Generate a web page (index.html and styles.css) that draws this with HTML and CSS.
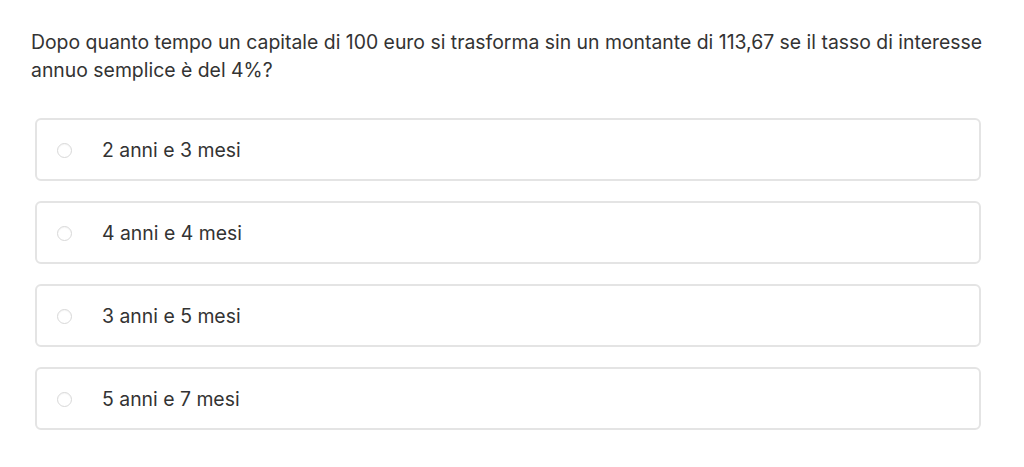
FILE: index.html
```html
<!DOCTYPE html>
<html lang="it">
<head>
<meta charset="utf-8">
<link rel="stylesheet" href="styles.css">
</head>
<body>
<div class="quiz">
  <p class="question">Dopo quanto tempo un capitale di 100 euro si trasforma sin un montante di 113,67 se il tasso di interesse annuo semplice è del 4%?</p>
  <div class="options">
    <label class="option"><span class="radio"></span><span class="label">2 anni e 3 mesi</span></label>
    <label class="option"><span class="radio"></span><span class="label">4 anni e 4 mesi</span></label>
    <label class="option"><span class="radio"></span><span class="label">3 anni e 5 mesi</span></label>
    <label class="option"><span class="radio"></span><span class="label">5 anni e 7 mesi</span></label>
  </div>
</div>
</body>
</html>
```
FILE: styles.css
```css
html, body {
  margin: 0;
  padding: 0;
  background: #ffffff;
}
body {
  font-family: Inter, "Liberation Sans", Arial, sans-serif;
  color: #333333;
}
.quiz {
  padding: 28px 30px 0 31px;
}
.question {
  margin: 0;
  font-size: 19.4px;
  line-height: 28px;
}
.options {
  display: flex;
  flex-direction: column;
  gap: 20px;
  margin: 34px 13px 0 4px;
}
.option {
  display: flex;
  align-items: center;
  height: 63px;
  box-sizing: border-box;
  border: 2px solid #e4e4e4;
  border-radius: 6px;
  padding-left: 20px;
}
.radio {
  width: 15px;
  height: 15px;
  border: 1px solid #d8d8d8;
  border-radius: 50%;
  box-sizing: border-box;
  flex: none;
  box-shadow: inset 0 1px 1px rgba(0,0,0,0.04);
  margin-top: 1px;
}
.label {
  margin-left: 30px;
  font-size: 19.4px;
  color: #333333;
  padding-top: 1px;
}
```
